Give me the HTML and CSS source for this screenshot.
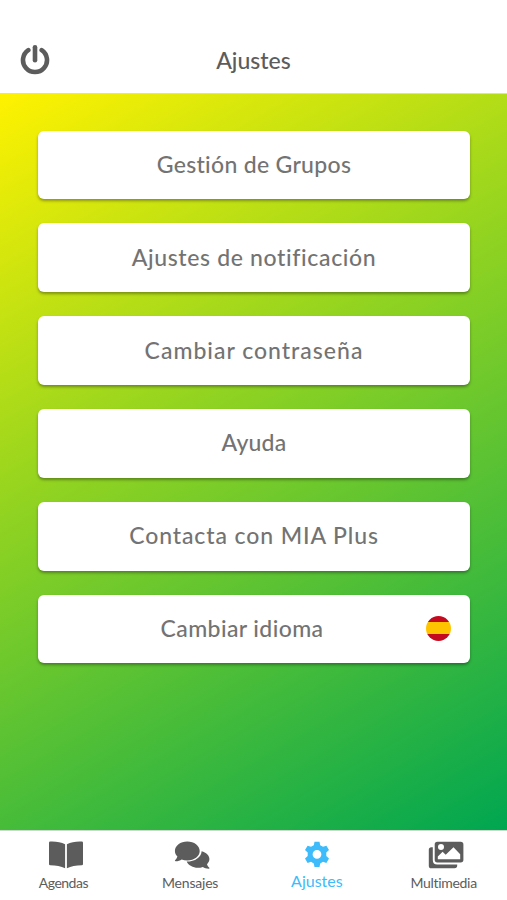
FILE: index.html
```html
<!DOCTYPE html>
<html lang="es">
<head>
    <meta charset="UTF-8">
    <meta name="viewport" content="width=device-width, initial-scale=1.0">
    <title>Ajustes</title>
    <link rel="stylesheet" href="styles.css">
</head>
<body>
    <header class="header">
        <svg class="power" viewBox="0 0 30 30">
            <path d="M8.3 5.1 A12 12 0 1 0 21.7 5.1" />
            <path d="M15 2.3 V15.2" />
        </svg>
        <h1>Ajustes</h1>
    </header>

    <main class="content">
        <button class="option grupos"><span>Gestión de Grupos</span></button>
        <button class="option notificacion"><span>Ajustes de notificación</span></button>
        <button class="option contrasena"><span>Cambiar contraseña</span></button>
        <button class="option ayuda"><span>Ayuda</span></button>
        <button class="option contacta"><span>Contacta con MIA Plus</span></button>
        <button class="option idioma">
            <span>Cambiar idioma</span>
            <i class="flag"></i>
        </button>
    </main>

    <nav class="tabs">
        <a class="tab agendas">
            <svg viewBox="0 0 36 28">
                <path d="M1 1.8 Q1 .7 2.2 .6 Q11 .2 17.1 3.3 V27.2 Q11 24.3 2.2 24.2 Q1 24.2 1 23 Z" />
                <path d="M35 1.8 Q35 .7 33.8 .6 Q25 .2 18.9 3.3 V27.2 Q25 24.3 33.8 24.2 Q35 24.2 35 23 Z" />
            </svg>
            <span>Agendas</span>
        </a>
        <a class="tab mensajes">
            <svg viewBox="0 0 36 28">
                <path d="M27.6 10.2 C32.1 11.3 35.4 14.2 35.4 18 C35.4 20 34.5 21.7 33 23.2 C33.4 24.7 34.3 25.9 35.3 26.8 C35.7 27.3 35.4 27.7 34.8 27.7 C32.3 27.6 30.4 26.8 28.9 25.9 C22.7 28.3 15.2 26 12.7 20.6 C21 20.6 27.6 16 27.6 10.2 Z" />
                <path d="M13.3 .5 C20.2 .5 25.7 4.7 25.7 10 C25.7 15.3 20.2 19.4 13.3 19.4 C11.3 19.4 9.4 19.1 7.7 18.4 C6.1 19.4 4.1 20.2 1.6 20.2 C.9 20.2 .7 19.7 1.1 19.3 C2.2 18.2 3 16.9 3.4 15.5 C1.8 14 .9 12.1 .9 10 C.9 4.7 6.4 .5 13.3 .5 Z" />
            </svg>
            <span>Mensajes</span>
        </a>
        <a class="tab active">
            <svg viewBox="0 0 36 28">
                <path fill-rule="evenodd" d="M15.5 .7 H20.5 L21.2 4.2 L24 5.8 L27.4 4.7 L30 9.1 L27.3 11.6 V15 L30 17.4 L27.4 21.9 L24 20.7 L21.2 22.4 L20.5 25.9 H15.5 L14.8 22.4 L12 20.7 L8.6 21.9 L6 17.4 L8.7 15 V11.6 L6 9.1 L8.6 4.7 L12 5.8 L14.8 4.2 Z M18 8.9 A4.4 4.4 0 1 0 18 17.7 A4.4 4.4 0 1 0 18 8.9 Z" />
            </svg>
            <span>Ajustes</span>
        </a>
        <a class="tab multimedia">
            <svg viewBox="0 0 36 28">
                <path fill-rule="evenodd" d="M9.3 .7 H32.7 Q35.4 .7 35.4 3.4 V18.8 Q35.4 21.5 32.7 21.5 H9.3 Q6.7 21.5 6.7 18.8 V3.4 Q6.7 .7 9.3 .7 Z M13 3 A3 3 0 1 0 13 9 A3 3 0 1 0 13 3 Z M9.8 18.2 H32.2 V13.2 L25.5 6.2 L17.7 13.7 L14.6 10.8 L9.8 15.5 Z" />
                <path d="M4.8 6.2 H3.4 Q.8 6.2 .8 8.8 V24.7 Q.8 27.3 3.4 27.3 H26.5 Q29.2 27.3 29.2 24.6 V23.5 H9.2 Q4.8 23.5 4.8 19 Z" />
            </svg>
            <span>Multimedia</span>
        </a>
    </nav>
</body>
</html>
```
FILE: styles.css
```css
* {
    box-sizing: border-box;
}

body {
    margin: 0;
    height: 100vh;
    display: flex;
    flex-direction: column;
    font-family: 'Lato', sans-serif;
    background-color: #fff;
    color: #5c5c5c;
}

.header {
    height: 94px;
    padding: 26px 20px 0;
    display: grid;
    grid-template-columns: 30px 1fr 30px;
    align-items: center;
    border-bottom: 1px solid #d9dcc8;
}

.power {
    width: 30px;
    height: 30px;
    fill: none;
    stroke: #5c5c5c;
    stroke-width: 4.6;
    stroke-linecap: round;
}

h1 {
    margin: 0;
    font-size: 23px;
    font-weight: 500;
    line-height: 30px;
    text-align: center;
}

.content {
    flex: 1;
    padding: 36.5px 37px 0 38px;
    display: flex;
    flex-direction: column;
    gap: 24.4px;
    background: linear-gradient(150deg, #fff200 0%, #94d420 40%, #00a651 100%);
}

.option {
    height: 68.5px;
    padding: 0 19px 2px;
    display: flex;
    justify-content: center;
    align-items: center;
    border: none;
    border-radius: 6px;
    background-color: #fff;
    box-shadow: 0 2px 3px rgba(0,0,0,0.35);
    color: #737373;
    font-family: inherit;
    font-size: 23px;
    font-weight: 500;
}

.grupos { letter-spacing: 0.3px; }
.notificacion { letter-spacing: 0.65px; }
.contrasena { letter-spacing: 1px; }
.ayuda { letter-spacing: 0.2px; }
.contacta { letter-spacing: 0.9px; }
.idioma { letter-spacing: 0.4px; }

.idioma span {
    flex: 1;
    padding-left: 1px;
}

.flag {
    width: 25px;
    height: 25px;
    border-radius: 50%;
    background: linear-gradient(#c40a1e 26%, #ffc400 26%, #ffc400 74%, #c40a1e 74%);
}

.tabs {
    height: 70px;
    padding-top: 10px;
    display: grid;
    grid-template-columns: repeat(4, 1fr);
    border-top: 1px solid #c9dccb;
    font-size: 14px;
    line-height: 18px;
}

.tab {
    display: flex;
    flex-direction: column;
    align-items: center;
    gap: 5px;
}

.tab svg {
    width: 36px;
    height: 28px;
    fill: #5c5c5c;
}

.agendas { letter-spacing: -0.5px; }
.mensajes { letter-spacing: -0.2px; }
.multimedia { letter-spacing: -0.3px; }

.agendas svg { margin-left: 5px; }
.mensajes svg { margin-left: 4px; }
.multimedia svg { margin-left: 4px; }

.tab.active {
    gap: 3px;
    color: #3dbbfa;
    font-size: 16px;
}

.tab.active svg {
    fill: #3dbbfa;
}
```
